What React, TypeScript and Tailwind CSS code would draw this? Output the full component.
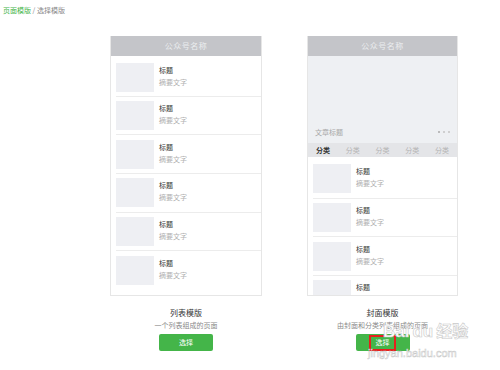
import React from "react";

const font = { fontFamily: '"Noto Sans CJK SC", "Noto Sans", sans-serif' };

const Item = ({ last }: { last?: boolean }) => (
  <div
    className={`ml-[5px] flex items-start py-[4.3px] ${
      last ? "" : "border-b border-[#ececec]"
    }`}
  >
    <div className="h-[29px] w-[38px] shrink-0 bg-[#eeeff3]" />
    <div className="ml-[5px] flex flex-col pt-[1px]">
      <span className="text-[7px] leading-[12px] text-[#333]">标题</span>
      <span className="text-[7px] leading-[12px] text-[#b0b0b0]">摘要文字</span>
    </div>
  </div>
);

const Header = () => (
  <div className="flex h-[20px] items-center justify-center bg-[#c4c5c9] text-[8px] tracking-[0.5px] text-[#eceef0]">
    公众号名称
  </div>
);

const Caption = ({
  title,
  desc,
  marked,
}: {
  title: string;
  desc: string;
  marked?: boolean;
}) => (
  <div className="mt-[11px] flex flex-col items-center">
    <div className="text-[8px] leading-[12px] text-[#333]">{title}</div>
    <div className="text-[7px] leading-[12px] text-[#8a8a8a]">{desc}</div>
    <div className="relative mt-[3px]">
      <button className="flex h-[17px] w-[54px] items-center justify-center rounded-[2px] bg-[#44b549] text-[7px] text-white">
        选择
      </button>
      {marked && (
        <div className="absolute left-[13px] top-[1px] h-[16px] w-[27px] border-2 border-[#e5201d]" />
      )}
    </div>
  </div>
);

export default function App() {
  return (
    <div className="relative h-[370px] w-[500px] overflow-hidden bg-white" style={font}>
      <div className="pl-[3px] pt-[4px] text-[7px] leading-[12px]">
        <span className="text-[#44b549]">页面模版</span>
        <span className="text-[#888]"> / 选择模版</span>
      </div>

      <div className="mt-[19.7px] flex gap-[45px] pl-[110px]">
        {/* list template */}
        <div className="flex w-[152px] flex-col">
          <div className="h-[260px] overflow-hidden border border-t-0 border-[#e6e6e6]">
            <Header />
            <div className="pt-[2.6px]">
              {[0, 1, 2, 3, 4, 5].map((i) => (
                <Item key={i} last={i === 5} />
              ))}
            </div>
          </div>
          <Caption title="列表模版" desc="一个列表组成的页面" />
        </div>

        {/* cover template */}
        <div className="flex w-[151px] flex-col">
          <div className="h-[260px] overflow-hidden border border-t-0 border-[#e6e6e6]">
            <Header />
            <div className="flex h-[87px] items-end justify-between bg-[#eef0f3] px-[7px] pb-[5px]">
              <span className="text-[7px] leading-[12px] text-[#a8a8a8]">文章标题</span>
              <span className="mb-[5px] flex gap-[3px]">
                <i className="block h-[2px] w-[2px] rounded-full bg-[#aaa]" />
                <i className="block h-[2px] w-[2px] rounded-full bg-[#c4c4c4]" />
                <i className="block h-[2px] w-[2px] rounded-full bg-[#c4c4c4]" />
              </span>
            </div>
            <div className="flex h-[14.5px] items-center bg-[#e4e5e8] text-[7px]">
              {[0, 1, 2, 3, 4].map((i) => (
                <span
                  key={i}
                  className={`flex-1 text-center ${
                    i === 0 ? "font-bold text-[#333]" : "text-[#b4b4b4]"
                  }`}
                >
                  分类
                </span>
              ))}
            </div>
            <div className="pl-[-1px] pt-[3px]">
              {[0, 1, 2, 3].map((i) => (
                <Item key={i} />
              ))}
            </div>
          </div>
          <Caption title="封面模版" desc="由封面和分类列表组成的页面" marked />
        </div>
      </div>

      {/* watermark */}
      <div className="pointer-events-none absolute left-[383px] top-[320px] flex items-baseline gap-[3px] text-white [-webkit-text-stroke:0.6px_#c9c9c9]">
        <span className="text-[17px] font-bold leading-[20px]" style={{ fontFamily: '"Liberation Sans", sans-serif' }}>
          Bai
        </span>
        <span className="text-[17px] font-bold leading-[20px]" style={{ fontFamily: '"Liberation Sans", sans-serif' }}>
          du
        </span>
        <span className="text-[16px] font-bold leading-[20px]">经验</span>
      </div>
      <div
        className="pointer-events-none absolute left-[368px] top-[346px] text-[11px] leading-[14px] text-white [-webkit-text-stroke:0.5px_#c9c9c9]"
        style={{ fontFamily: '"Liberation Sans", sans-serif' }}
      >
        jingyan.baidu.com
      </div>
    </div>
  );
}
